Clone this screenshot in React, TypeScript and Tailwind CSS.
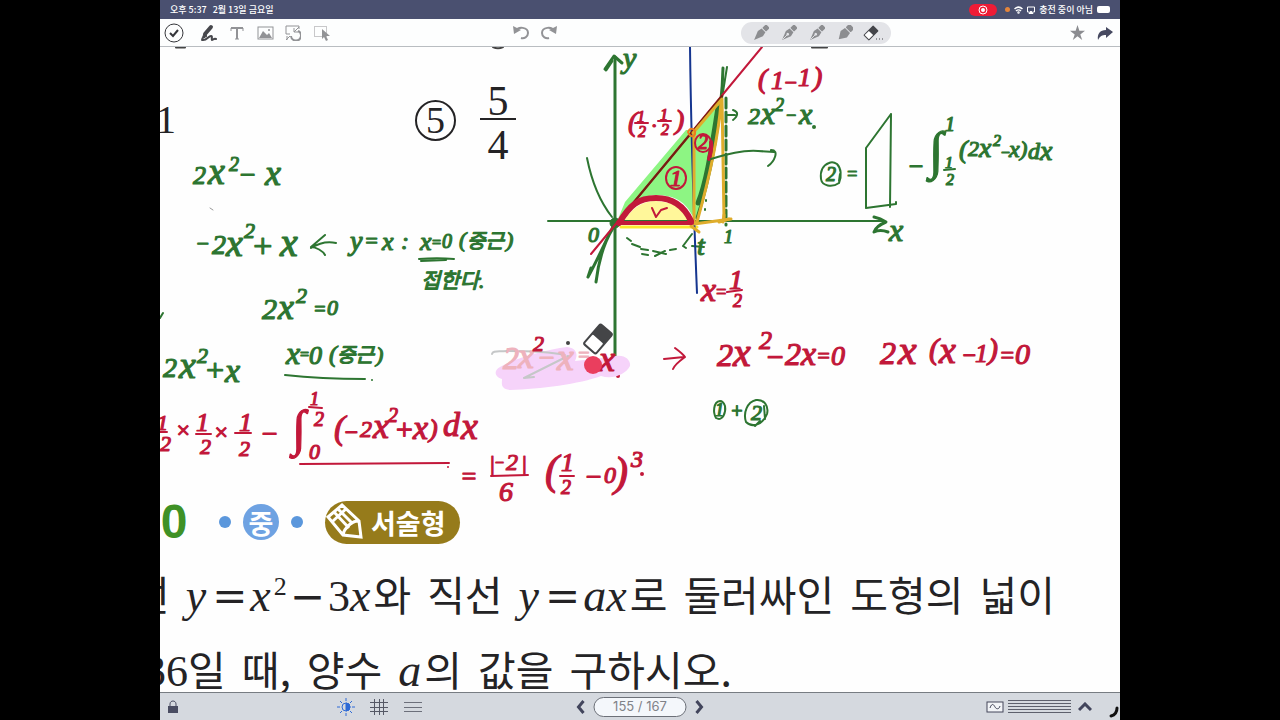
import { FC, ReactNode } from "react";

const GREEN = "#2d7531";
const RED = "#c2183a";
const FADED = "#eeb2bd";

// text, x, baseline, font size
type Glyph = [string, number, number, number];

interface InkProps {
	color: string;
	glyphs: Glyph[];
}

const greenNotes: Glyph[] = [
	// 2x² − x
	["2", 193, 184, 26], ["x", 208, 184, 38], ["2", 229, 171, 20], ["−", 238, 184, 28], ["x", 265, 185, 36],
	// −2x² + x
	["−", 195, 251, 22], ["2", 212, 254, 28], ["x", 226, 256, 38], ["2", 244, 238, 22], ["+", 251, 257, 34], ["x", 280, 256, 40],
	["y", 350, 250, 28], ["=", 364, 248, 22], ["x", 382, 250, 26], [":", 401, 249, 24],
	["x", 420, 250, 26], ["=", 431, 248, 16], ["0", 442, 248, 20], ["(", 459, 247, 22], ["중근", 467, 248, 20], [")", 506, 247, 22],
	["접한다.", 421, 288, 21],
	// 2x² = 0
	["2", 262, 319, 30], ["x", 278, 319, 36], ["2", 296, 303, 22], ["=", 313, 316, 20], ["0", 327, 315, 22],
	["x", 286, 364, 32], ["=", 299, 360, 16], ["0", 309, 364, 26], ["(", 329, 362, 24], ["중근", 337, 362, 20], [")", 376, 362, 22],
	// 2x² + x
	["2", 163, 377, 28], ["x", 179, 378, 38], ["2", 197, 363, 22], ["+", 204, 381, 32], ["x", 225, 382, 34],
	// graph labels
	["y", 623, 68, 30], ["0", 588, 242, 22], ["t", 697, 255, 28], ["1", 724, 243, 18], ["x", 889, 241, 32],
	["2", 748, 124, 24], ["x", 761, 124, 32], ["2", 775, 111, 18], ["−", 785, 121, 18], ["x", 799, 124, 30],
	// ② = area − ∫
	["2", 826, 181, 20], ["=", 846, 180, 18], ["−", 907, 175, 26], ["∫", 929, 168, 52], ["1", 945, 131, 20],
	["1", 945, 168, 16], ["2", 946, 185, 16], ["(", 959, 158, 26], ["2", 968, 156, 22], ["x", 979, 157, 28], ["2", 993, 146, 16],
	["−", 1000, 158, 16], ["x", 1009, 157, 24], [")", 1020, 156, 22], ["d", 1028, 159, 24], ["x", 1040, 160, 28],
	["1", 715, 416, 18], ["+", 730, 418, 20], ["2", 751, 420, 22],
];

const redNotes: Glyph[] = [
	["1", 157, 430, 22], ["2", 160, 451, 22], ["×", 175, 438, 24], ["1", 196, 431, 26], ["2", 200, 454, 22],
	["×", 213, 440, 24], ["1", 239, 431, 26], ["2", 239, 456, 22], ["−", 260, 443, 28], ["∫", 292, 445, 50],
	["1", 310, 405, 18], ["2", 314, 426, 20], ["0", 309, 459, 22], ["(", 334, 439, 34], ["−", 343, 440, 24],
	["2", 360, 437, 24], ["x", 373, 438, 36], ["2", 388, 422, 20], ["+", 394, 439, 30], ["x", 413, 439, 34], [")", 429, 437, 26],
	["d", 443, 436, 34], ["x", 461, 439, 38],
	["=", 460, 485, 26], ["|", 489, 470, 22], ["−", 494, 468, 16], ["2", 506, 470, 24], ["|", 521, 470, 22], ["6", 499, 501, 28],
	["(", 545, 484, 42], ["1", 561, 471, 26], ["2", 561, 494, 20], ["−", 584, 486, 28], ["0", 604, 483, 24], [")", 614, 486, 42], ["3", 631, 467, 24],
	// second equation
	["2", 717, 366, 32], ["x", 733, 366, 40], ["2", 759, 349, 26], ["−", 765, 367, 30], ["2", 785, 365, 32], ["x", 801, 365, 34],
	["=", 816, 363, 22], ["0", 831, 365, 28],
	["2", 880, 364, 32], ["x", 898, 364, 42], ["(", 929, 359, 30], ["x", 939, 363, 38], ["−", 961, 363, 24], ["1", 975, 362, 26],
	[")", 988, 359, 30], ["=", 999, 363, 24], ["0", 1015, 364, 30],
	["2", 533, 351, 22], ["x", 599, 371, 36],
	// graph labels
	["(", 758, 88, 28], ["1", 771, 89, 26], ["−", 783, 90, 22], ["1", 798, 86, 26], [")", 813, 86, 28],
	["(", 628, 131, 28], ["1", 637, 122, 16], ["2", 638, 137, 16], [".", 652, 127, 22], ["1", 660, 120, 16], ["2", 661, 135, 16], [")", 675, 129, 28],
	["2", 698, 149, 20], ["1", 670, 186, 24],
	["x", 701, 301, 34], ["=", 715, 298, 18], ["1", 729, 289, 28], ["2", 733, 307, 18],
];

const fadedNotes: Glyph[] = [
	["2", 503, 369, 32], ["x", 518, 368, 36], ["−", 537, 367, 28], ["x", 557, 370, 38], ["=", 577, 362, 20],
];

const Ink: FC<InkProps> = ({ color, glyphs }) => (
	<g
		fill={color}
		stroke={color}
		strokeWidth={1.200}
		strokeLinejoin="round"
		className="font-['Liberation_Serif','Noto_Sans_CJK_KR',serif] italic"
	>
		{glyphs.map(([text, x, y, size], index) => (
			<text key={index} x={x} y={y} fontSize={size}>
				{text}
			</text>
		))}
	</g>
);

const InkLayer = () => (
	<svg
		className="absolute left-0 top-0 h-[645px] w-[960px]"
		viewBox="160 47 960 645"
		fill="none"
		strokeLinecap="round"
		strokeLinejoin="round"
		role="img"
		aria-label="Handwritten notes"
	>
		{/* page edges cut off by the toolbar */}
		<g stroke="#444" strokeWidth={2}>
			<path d="M176 47.500h9M812 47.500h15M493 47c3 1.500 7 1.500 10 0" />
		</g>

		{/* Shaded regions */}
		<path d="M618 219L625 202L686 130L693 130L721 99L719 112L697 219L692 215C684 199 671 195 655 195C638 196 629 209 621 222Z" fill="#8df583" />
		<path d="M624 221C632 208 642 201 656 201C674 202 684 209 690 221Z" fill="#fff79a" />
		<path d="M621 227H697" stroke="#fbe92f" strokeWidth={3} />

		{/* Axes */}
		<g stroke={GREEN}>
			<path d="M615 57V359" strokeWidth={3} />
			<path d="M605 69L614 56L622 63M606 70l6-9" strokeWidth={3} />
			<path d="M548 221H884" strokeWidth={2} />
			<path d="M874 217c5 1 9 3 12 5c-5 2-10 5-12 10c4-2 9-2 14 0" strokeWidth={3} />
			<path d="M587 158C592 183 601 203 612 217" strokeWidth={2} />
			<path d="M615 223C606 240 598 259 588 277M613 228C602 246 598 265 596 282M588 277l3-9" strokeWidth={3} />
			<circle cx={615} cy={223} r={5} fill={GREEN} />
			<path d="M723 68C722 115 710 180 697 218" strokeWidth={3} />
			<path d="M718 108C712 145 707 181 698 203" strokeWidth={5} />
			<path d="M727 67L722 98" strokeWidth={2} />
			<path d="M726 98V225" strokeWidth={3} strokeDasharray="10 4" />
			<path d="M627 238l4 3M632 244l8 3M641 249l7 1M642 254l6 1M653 251l13 3M655 256l10-5M670 250l6-1M683 246l9-12M683 246l3 2M692 246l12 1" strokeWidth={2} />
			<path d="M706 200v1M705 209v1" strokeWidth={2} />
		</g>

		<path d="M690 47C691 130 694 220 697 293" stroke="#15358f" strokeWidth={2} />
		<path d="M591 254L762 47" stroke={RED} strokeWidth={2} />
		<path d="M634 202L722 96" stroke="#722010" strokeWidth={2} />
		<g stroke="#dfad2c" strokeWidth={3}>
			<path d="M693 133L722 99L724 218M694 134L694 222M721 103C718 140 709 179 697 222M694 224L731 219M691 226l8 6" />
			<path d="M724 215l-1 7M719 222l10-3" />
			<path d="M688 132c2-5 8-4 7 2c-2 4-6 2-7-2Z" stroke="#ed7c20" strokeWidth={2} />
		</g>

		{/* Red arch */}
		<path d="M619 223C630 205 638 198 656 198C675 198 685 208 691 221" stroke={RED} strokeWidth={6} />
		<path d="M618 223H692" stroke={RED} strokeWidth={4} />
		<path d="M652 208l4 9l5-7l6-2" stroke={RED} strokeWidth={2} />
		<path d="M711 142c1 7-1 13-2 17" stroke={RED} strokeWidth={4} />
		<ellipse cx={703} cy={143} rx={8} ry={9} stroke={RED} strokeWidth={2} />
		<ellipse cx={676} cy={178} rx={10} ry={11} stroke={RED} strokeWidth={2} />

		{/* Arrows, underlines and fraction bars */}
		<g stroke={GREEN} strokeWidth={2}>
			<path d="M711 159C728 154 742 150 758 151L774 152M771 150c9 0 3 12-3 16" />
			<path d="M727 115h8M733 110c6 2 5 6 0 10" />
			<path d="M866 148L891 114M891 114L890 207M866 148L866 208M866 208L896 204V202" />
			<path d="M944 170l11-1" />
			<path d="M829 163c-6 2-9 8-8 16c1 7 11 9 18 4c3-7 2-15-2-19c-3-2-6-2-8-1ZM839 181l1-7" />
			<path d="M336 243c-9-2-17 0-25 5M325 235l-14 12c5 0 12 4 14 8" />
			<path d="M419 259c12-1 24-1 35 0M421 261l25-1" />
			<path d="M285 375c27 3 52 4 80 4M372 380v0" />
			<path d="M160 318l3-5" />
			<path d="M720 401c-7 1-7 12-4 17c7 4 10-6 9-12c-1-3-3-5-5-5Z" />
			<path d="M756 400c-9 2-13 13-10 22c6 6 17 3 21-8c2-8-3-15-11-14ZM764 406l1 13M755 426l5-5" />
			<path d="M814 127v0" strokeWidth={4} />
			<path d="M210 208l3 2" stroke="#999" strokeWidth={1} />
		</g>
		<g stroke={RED} strokeWidth={2}>
			<path d="M158 432h9M196 434h15M235 433h16M309 407l13 1M300 464L449 463M448 467v0M491 476L528 475M560 476h14" />
			<path d="M635 123h13M658 121h13M727 292l15-2" />
			<path d="M664 359l20-2M675 348c4 3 8 6 10 9c-4 3-10 7-12 12" />
			<path d="M642 474v0M618 376v0" strokeWidth={4} />
		</g>

		{/* Eraser trail */}
		<path
			d="M500 367C515 358 545 350 567 347C577 348 578 355 575 361L612 357C624 353 631 360 630 366C626 374 613 380 601 376C580 384 540 389 510 390C500 389 502 383 502 379C495 377 493 371 500 367Z"
			fill="#f6d3fa"
		/>
		<path d="M492 354c1-4 6-2 15-3c18 0 38 0 58 4M524 378l10-1M524 378l44-22" stroke="#c5c7c8" strokeWidth={2} />

		<Ink color={GREEN} glyphs={greenNotes} />
		<Ink color={FADED} glyphs={fadedNotes} />
		<Ink color={RED} glyphs={redNotes} />

		<circle cx={568} cy={343} r={2} fill="#444" />
		<circle cx={593} cy={365} r={9} fill="#ea3e5e" />
		<g transform="translate(598 339) rotate(-49)">
			<rect x={-14} y={-9} width={28} height={18} rx={3} fill="#444547" />
			<rect x={-12} y={-7} width={12} height={14} rx={1} fill="#fff" />
		</g>
	</svg>
);

const PenIcon = ({ wide, nib }: { wide?: boolean; nib?: boolean }) => (
	<svg width="16" height="16" viewBox="0 0 18 18" fill="#8c8d90">
		<g transform="rotate(45 9 9)">
			<rect x={wide ? 5 : 6} y="-2" width={wide ? 8 : 6} height="6" rx="1" />
			<path d={wide ? "M5 5h8l1 6l-5 8l-5-8Z" : "M6 5h6l1 5l-4 10l-4-10Z"} />
			{nib && <path d="M9 19v-7" stroke="#e3e4e8" strokeWidth="1" />}
			{nib && <circle cx="9" cy="11" r="1.500" fill="#e3e4e8" />}
		</g>
	</svg>
);

const ToolButton = ({ label, className = "", children }: { label: string; className?: string; children: ReactNode }) => (
	<button aria-label={label} className={`flex h-6 w-5 shrink-0 items-center justify-center ${className}`}>
		{children}
	</button>
);

const StatusBar = () => (
	<div className="flex h-[19px] shrink-0 items-center justify-between bg-[#4a5070] px-[10px] text-[9px] font-medium leading-none text-white">
		<div className="flex gap-[6px]">
			<span>오후 5:37</span>
			<span>2월 13일 금요일</span>
		</div>
		<div className="flex items-center gap-1">
			<span className="flex h-3 w-7 items-center justify-center rounded-full bg-[#ee1c36]">
				<svg width="10" height="10" viewBox="0 0 10 10">
					<circle cx="5" cy="5" r="4" fill="none" stroke="#fff" />
					<circle cx="5" cy="5" r="2" fill="#fff" />
				</svg>
			</span>
			<span className="ml-1 h-[5px] w-[5px] rounded-full bg-[#e5853b]" />
			<svg width="9" height="8" viewBox="0 0 18 14" fill="none" stroke="#fff" strokeWidth="3">
				<path d="M1 5c5-5 11-5 16 0M4 9c3-3 7-3 10 0" />
				<circle cx="9" cy="12" r="1" />
			</svg>
			<svg width="8" height="8" viewBox="0 0 16 16" fill="none" stroke="#fff" strokeWidth="2">
				<path d="M5 12H1V2h14v10h-4" />
				<path d="M8 10l4 5H4Z" fill="#fff" />
			</svg>
			<span>충전 중이 아님</span>
			<span className="h-[7px] w-[13px] rounded-[2px] bg-white" />
		</div>
	</div>
);

const Toolbar = () => (
	<div className="relative flex h-7 shrink-0 items-center justify-between border-b border-[#b9bdc1] bg-[#fdfefe] pl-1 pr-[5px]">
		<div className="flex items-center">
			<ToolButton label="Done">
				<svg width="20" height="20" viewBox="0 0 20 20" fill="none" stroke="#35363a">
					<circle cx="10" cy="10" r="9" strokeWidth="1" />
					<path d="M6 10l3 3l5-6" strokeWidth="2" />
				</svg>
			</ToolButton>
			<ToolButton label="Pen" className="ml-[15px]">
				<svg width="18" height="18" viewBox="0 0 18 18" fill="none" stroke="#46474c" strokeLinecap="round">
					<path d="M5 10L11 3" strokeWidth="4" />
					<path d="M3 12l1-2l3 2l-5 3Z" fill="#46474c" strokeWidth="1" />
					<path d="M2 16c5 1 6-4 9-4c2 0 0 3 1 4c1 0 2-2 4-1" strokeWidth="2" />
				</svg>
			</ToolButton>
			<ToolButton label="Text" className="ml-2">
				<svg width="14" height="14" viewBox="0 0 14 14" fill="none" stroke="#929396">
					<path d="M1 5V2h12v3M5 13h4" strokeWidth="1" />
					<path d="M1 2h12M7 2v11" strokeWidth="2" />
				</svg>
			</ToolButton>
			<ToolButton label="Image" className="ml-2">
				<svg width="17" height="14" viewBox="0 0 17 14" fill="#929396">
					<rect x="1" y="1" width="15" height="12" fill="none" stroke="#929396" />
					<path d="M2 12l4-7l4 4l2-2l3 5Z" />
					<circle cx="12" cy="4" r="1" />
				</svg>
			</ToolButton>
			<ToolButton label="Shapes" className="ml-2">
				<svg width="16" height="16" viewBox="0 0 16 16" fill="none" stroke="#929396">
					<path d="M5 9H1V1h13v3M14 2L9 7M9 3v4h4M1 15l4-4M2 11v4" strokeWidth="1" />
					<path d="M13 6a5 5 0 1 1-7 5" strokeWidth="2" />
				</svg>
			</ToolButton>
			<ToolButton label="Select" className="ml-2">
				<svg width="17" height="16" viewBox="0 0 17 16">
					<rect x="1.500" y="1.500" width="12" height="10" fill="none" stroke="#929396" strokeDasharray="1 1" />
					<path d="M9 4v10l2-2l2 4l2-1l-2-4h4Z" fill="#929396" />
				</svg>
			</ToolButton>
		</div>

		<div className="absolute left-[351px] flex gap-2">
			<ToolButton label="Undo">
				<svg width="16" height="15" viewBox="0 0 16 15" fill="none" stroke="#929396" strokeWidth="2">
					<path d="M3 6c2-5 12-4 12 2c0 4-4 6-7 5" />
					<path d="M0 1l1 8l7-4Z" fill="#929396" stroke="none" />
				</svg>
			</ToolButton>
			<ToolButton label="Redo">
				<svg width="16" height="15" viewBox="0 0 16 15" fill="none" stroke="#929396" strokeWidth="2">
					<path d="M13 6C11 1 1 2 1 8c0 4 4 6 7 5" />
					<path d="M16 1l-1 8l-7-4Z" fill="#929396" stroke="none" />
				</svg>
			</ToolButton>
		</div>

		<div className="absolute left-[581px] flex h-[22px] items-center gap-2 rounded-full bg-[#e3e4e8] pl-[10px] pr-2">
			<ToolButton label="Pencil"><PenIcon /></ToolButton>
			<ToolButton label="Fountain pen"><PenIcon nib /></ToolButton>
			<ToolButton label="Ink pen"><PenIcon nib /></ToolButton>
			<ToolButton label="Highlighter"><PenIcon wide /></ToolButton>
			<ToolButton label="Eraser">
				<svg width="20" height="16" viewBox="0 0 20 16" className="shrink-0">
					<g transform="rotate(-45 8 8)">
						<rect x="1" y="4" width="14" height="8" rx="1" fill="#44454a" />
						<rect x="2" y="5" width="6" height="6" fill="#fff" />
					</g>
					<path d="M13 14h1M16 14h1M19 14h1" stroke="#44454a" />
				</svg>
			</ToolButton>
		</div>

		<div className="flex gap-2">
			<ToolButton label="Favorite">
				<svg width="15" height="15" viewBox="0 0 16 16" fill="#8b8c90">
					<path d="M8 0l2 6h6l-5 4l2 6l-5-4l-5 4l2-6l-5-4h6Z" />
				</svg>
			</ToolButton>
			<ToolButton label="Share">
				<svg width="16" height="14" viewBox="0 0 16 14" fill="#464960">
					<path d="M9 1l7 5l-7 6V9C5 9 3 10 1 14C0 8 3 4 9 4Z" />
				</svg>
			</ToolButton>
		</div>
	</div>
);

const M = ({ children }: { children: ReactNode }) => (
	<i className="pr-[3px] font-['Liberation_Serif',serif] text-[46px]">{children}</i>
);

const N = ({ children }: { children: ReactNode }) => (
	<span className="font-['Liberation_Serif',serif] text-[44px]">{children}</span>
);

const Op = ({ children }: { children: ReactNode }) => (
	<span className="px-[3px] font-['DejaVu_Serif',serif] text-[42px]">{children}</span>
);

const PrintedPage = () => (
	<div className="flex flex-col whitespace-nowrap text-[#242325]">
		{/* Answer options */}
		<div className="mt-[34px] flex h-[78px] items-center font-['Liberation_Serif',serif] text-[40px] leading-none">
			<span className="-ml-1 w-[259px]">1</span>
			<span className="flex h-[41px] w-[41px] items-center justify-center rounded-full border-2 border-[#242325] text-[38px]">5</span>
			<span className="ml-6 flex w-9 flex-col items-center text-[42px]">
				<span className="h-10 w-full border-b-2 border-[#242325] text-center">5</span>
				<span className="h-10 pt-1">4</span>
			</span>
		</div>

		{/* Problem header */}
		<div className="mt-[341px] flex h-11 items-center">
			<span className="-ml-[26px] w-[85px] font-['Liberation_Sans',sans-serif] text-[48px] font-bold leading-none text-[#3f9126]">00</span>
			<span className="h-3 w-3 rounded-full bg-[#5b97dc]" />
			<span className="mx-3 flex h-9 w-9 items-center justify-center rounded-full bg-[#6ea2e2] text-[27px] font-bold leading-none text-white">중</span>
			<span className="h-3 w-3 rounded-full bg-[#5b97dc]" />
			<span className="ml-[22px] flex h-[43px] w-[135px] items-center gap-2 rounded-full bg-[#967b1b] text-[27px] font-bold leading-none text-white">
				<svg width="38" height="38" viewBox="0 0 38 38" fill="none" stroke="#fff" strokeWidth="3">
					<path d="M3 14L17 2L34 18L36 34L18 32ZM18 32C19 25 28 17 34 18M9 9l15 16M13 6l15 15M8 18L22 5" />
				</svg>
				서술형
			</span>
		</div>

		<p className="-ml-7 mt-3 flex h-[75px] items-baseline gap-4 text-[41px] leading-[75px]">
			<span>선</span>
			<span><M>y</M><Op>=</Op><M>x</M><sup className="-top-4 font-['Liberation_Serif',serif] text-[26px]">2</sup><Op>−</Op><N>3</N><M>x</M>와</span>
			<span>직선</span>
			<span><M>y</M><Op>=</Op><M>ax</M>로</span>
			<span>둘러싸인</span>
			<span>도형의</span>
			<span>넓이</span>
		</p>
		<p className="-ml-4 flex h-[75px] items-baseline gap-4 text-[41px] leading-[75px]">
			<span><N>36</N>일</span>
			<span>때,</span>
			<span>양수</span>
			<span><M>a</M>의</span>
			<span>값을</span>
			<span>구하시오.</span>
		</p>
	</div>
);

const BottomBar = () => (
	<div className="relative z-10 flex h-7 shrink-0 items-center justify-between border-t border-[#777c82] bg-[#d5d9df] pl-[3px] text-[#44475a]">
		<div className="flex items-center">
			<ToolButton label="Lock">
				<svg width="12" height="14" viewBox="0 0 12 14" fill="none" stroke="#4a4d62">
					<path d="M3 7V4c0-4 6-4 6 0v3" strokeWidth="1" />
					<rect x="2" y="7" width="8" height="5" fill="#4a4d62" strokeWidth="2" />
				</svg>
			</ToolButton>
			<ToolButton label="Brightness" className="ml-[153px]">
				<svg width="18" height="18" viewBox="0 0 18 18" fill="none" stroke="#2f6bd6">
					<circle cx="9" cy="9" r="4" />
					<path d="M9 5a4 4 0 0 1 0 8Z" fill="#2f6bd6" />
					<path d="M9 0v3M9 15v3M0 9h3M15 9h3M3 3l2 2M13 13l2 2M15 3l-2 2M5 13l-2 2" />
				</svg>
			</ToolButton>
			<ToolButton label="Grid" className="ml-[13px]">
				<svg width="18" height="18" viewBox="0 0 18 18" stroke="#555865">
					<path d="M4.500 1v16M9.500 1v16M13.500 1v16M0 4.500h18M0 9.500h18M0 13.500h18" />
				</svg>
			</ToolButton>
			<ToolButton label="Lines" className="ml-[14px]">
				<svg width="18" height="12" viewBox="0 0 18 12" stroke="#6c6f7a">
					<path d="M0 1.500h18M0 6.500h18M0 10.500h18" />
				</svg>
			</ToolButton>
		</div>

		<div className="absolute left-1/2 flex -translate-x-1/2 items-center gap-[3px]">
			<ToolButton label="Previous page">
				<svg width="10" height="14" viewBox="0 0 10 14" fill="none" stroke="#42455c" strokeWidth="3">
					<path d="M8 1L3 7l5 6" />
				</svg>
			</ToolButton>
			<button className="h-5 w-[93px] rounded-full border border-[#6c7078] bg-[#f4f7fb] font-['Inter',sans-serif] text-[13px] leading-none text-[#808288]">
				155 / 167
			</button>
			<ToolButton label="Next page">
				<svg width="10" height="14" viewBox="0 0 10 14" fill="none" stroke="#42455c" strokeWidth="3">
					<path d="M2 1l5 6l-5 6" />
				</svg>
			</ToolButton>
		</div>

		<div className="flex items-center">
			<ToolButton label="Ink style">
				<svg width="18" height="12" viewBox="0 0 18 12" fill="none" stroke="#44475a">
					<rect x="1" y="1" width="16" height="10" fill="#f2f4f7" />
					<path d="M4 7c2-6 4-3 5-1s4 3 5-1" strokeWidth="1" />
				</svg>
			</ToolButton>
			<svg width="63" height="15" viewBox="0 0 63 15" stroke="#5d606c" className="ml-[3px]">
				<path d="M0 1.500h63M0 4.500h63M0 7.500h63M0 10.500h63M0 13.500h63" />
			</svg>
			<ToolButton label="Expand" className="ml-1">
				<svg width="14" height="10" viewBox="0 0 14 10" fill="none" stroke="#42455c" strokeWidth="3">
					<path d="M1 8l6-6l6 6" />
				</svg>
			</ToolButton>
			<svg width="14" height="14" viewBox="0 0 14 14" fill="none" stroke="#111" strokeWidth="3" strokeLinecap="round" className="ml-[11px] mt-3">
				<path d="M11 2c0 4-2 7-6 8" />
			</svg>
		</div>
	</div>
);

const App = () => {
	return (
		<div className="flex h-screen justify-center bg-black">
			<div className="flex w-3/4 flex-col overflow-hidden bg-white font-['Noto_Sans_CJK_KR',sans-serif]">
				<StatusBar />
				<Toolbar />
				<main className="relative min-h-0 flex-1 overflow-hidden bg-[#fefefe]">
					<PrintedPage />
					<InkLayer />
				</main>
				<BottomBar />
			</div>
		</div>
	);
};

export default App;
